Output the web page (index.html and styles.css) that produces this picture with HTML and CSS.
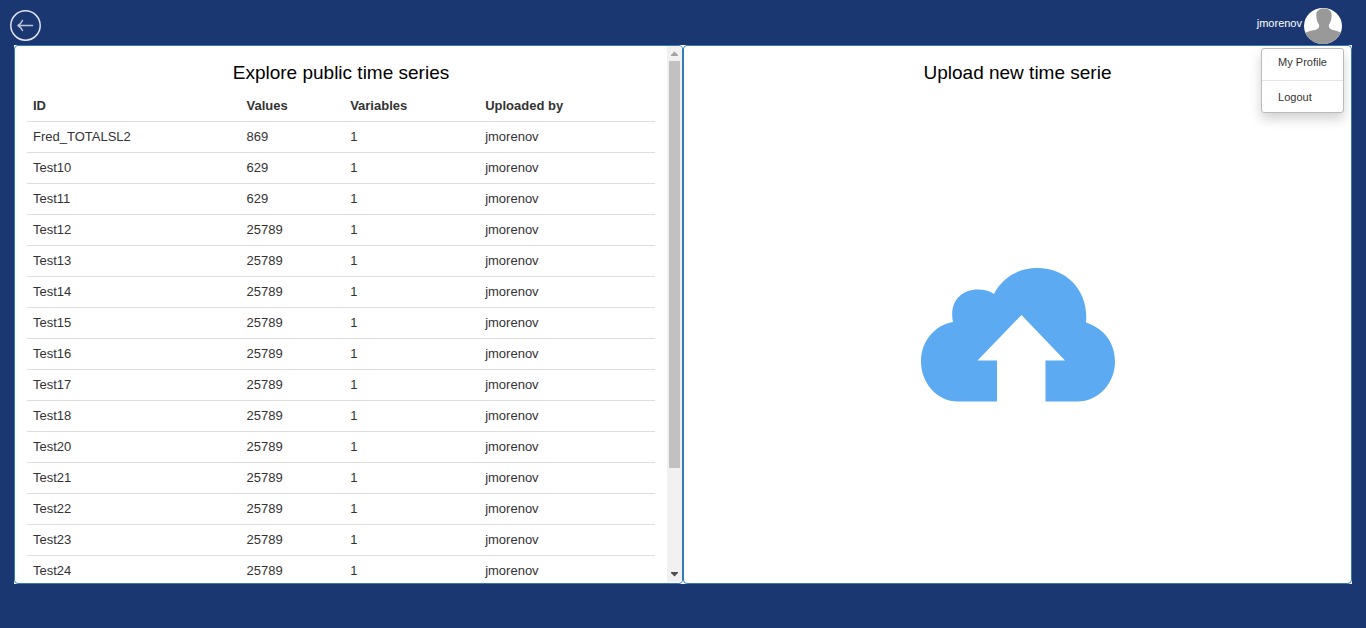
FILE: index.html
```html
<!DOCTYPE html>
<html lang="en">
<head>
<meta charset="utf-8">
<title>Time series</title>
<link rel="stylesheet" href="styles.css">
</head>
<body>
<header class="topbar">
  <button class="back" type="button" aria-label="Back">
    <svg width="32" height="32" viewBox="0 0 32 32" fill="none" stroke-linecap="round" stroke-linejoin="round">
      <circle cx="15.500" cy="16.500" r="14.700" stroke="#dfe4ef" stroke-width="1.500"/>
      <path d="M22.500 16.500H8.500M12.500 11.500C11.300 14 10 15.300 8 16.500C10 17.700 11.300 19 12.500 21.500" stroke="#bcc5da" stroke-width="1.500"/>
    </svg>
  </button>
  <div class="account">
    <button class="account-toggle" type="button">
      <span>jmorenov</span>
      <svg class="avatar" width="38" height="36" viewBox="0 0 38 36">
        <defs><clipPath id="round"><ellipse cx="19" cy="18" rx="19" ry="18"/></clipPath></defs>
        <g clip-path="url(#round)">
          <path fill="#fff" d="M0 0h38v36H0z"/>
          <path fill="#999" d="M20 .5C15 .5 12.200 3 12.300 7C12.400 11 13 14 15 16.500C15.500 19.500 14.500 21 11 22C7 22.800 3 23.500 0 25.500V36H38V25C35 23.500 32 22.700 29 22C25.500 21 24.500 19.500 25 16.500C27 14 27.500 11 27.600 7C27.700 3 25 .5 20 .5Z"/>
        </g>
      </svg>
    </button>
    <nav class="menu">
      <a href="#profile">My Profile</a>
      <a href="#logout">Logout</a>
    </nav>
  </div>
</header>
<main class="panels">
  <section class="panel explore">
    <div class="list">
      <h2>Explore public time series</h2>
      <table>
        <thead><tr><th class="id">ID</th><th class="values">Values</th><th class="variables">Variables</th><th>Uploaded by</th></tr></thead>
        <tbody>
          <tr><td>Fred_TOTALSL2</td><td>869</td><td>1</td><td>jmorenov</td></tr>
          <tr><td>Test10</td><td>629</td><td>1</td><td>jmorenov</td></tr>
          <tr><td>Test11</td><td>629</td><td>1</td><td>jmorenov</td></tr>
          <tr><td>Test12</td><td>25789</td><td>1</td><td>jmorenov</td></tr>
          <tr><td>Test13</td><td>25789</td><td>1</td><td>jmorenov</td></tr>
          <tr><td>Test14</td><td>25789</td><td>1</td><td>jmorenov</td></tr>
          <tr><td>Test15</td><td>25789</td><td>1</td><td>jmorenov</td></tr>
          <tr><td>Test16</td><td>25789</td><td>1</td><td>jmorenov</td></tr>
          <tr><td>Test17</td><td>25789</td><td>1</td><td>jmorenov</td></tr>
          <tr><td>Test18</td><td>25789</td><td>1</td><td>jmorenov</td></tr>
          <tr><td>Test20</td><td>25789</td><td>1</td><td>jmorenov</td></tr>
          <tr><td>Test21</td><td>25789</td><td>1</td><td>jmorenov</td></tr>
          <tr><td>Test22</td><td>25789</td><td>1</td><td>jmorenov</td></tr>
          <tr><td>Test23</td><td>25789</td><td>1</td><td>jmorenov</td></tr>
          <tr><td>Test24</td><td>25789</td><td>1</td><td>jmorenov</td></tr>
        </tbody>
      </table>
    </div>
    <div class="scrollbar" aria-hidden="true">
      <svg width="15" height="15" viewBox="0 0 15 15"><path fill="#a3a3a3" d="M4 10h7v-1L7.500 5.500 4 9z"/></svg>
      <div class="track"><div class="thumb"></div></div>
      <svg width="15" height="15" viewBox="0 0 15 15"><path fill="#505050" d="M4 5h7v1L7.500 9.500 4 6z"/></svg>
    </div>
  </section>
  <section class="panel upload">
    <h2>Upload new time serie</h2>
    <button class="drop" type="button" aria-label="Upload new time serie">
      <svg width="194" height="134" viewBox="0 0 194 134">
        <path fill="#5caaf2" d="M76 133.500H37C16 133.500 0 115 0 93.500C0 73 14 57 32 54C28 35 39 21.500 57 21.500C63 21.500 68 22.500 73 26C81 10 97 0 116 0C147 0 168 24 165 54.500C182 60 194 74 194 93.500C194 115 178 133.500 156 133.500H124.500V92.500H144L100.500 47L56.500 92.500H76Z"/>
      </svg>
    </button>
  </section>
</main>
</body>
</html>
```

FILE: styles.css
```css
* {
  box-sizing: border-box;
}

body {
  margin: 0;
  height: 100vh;
  padding: 0 14px 44px;
  display: flex;
  flex-direction: column;
  background: #1b3771;
  color: #333;
  font: 13px/18px "Liberation Sans", Arial, sans-serif;
}

button {
  border: 0;
  padding: 0;
  background: none;
  font: inherit;
  color: inherit;
  cursor: pointer;
}

svg {
  display: block;
}

.topbar {
  flex: none;
  height: 45px;
  margin: 0 -4px;
  padding-top: 8px;
  display: flex;
  align-items: flex-start;
  justify-content: space-between;
}

.back {
  margin-top: 1px;
}

.account {
  position: relative;
  margin-right: 14px;
}

.account-toggle {
  display: flex;
  gap: 2px;
  color: #fff;
  font-size: 11px;
}

.account-toggle span {
  margin-top: 6px;
}

.menu {
  position: absolute;
  z-index: 1;
  top: 40px;
  right: -2px;
  border: 1px solid #bbb;
  border-radius: 3px;
  background: #fff;
  box-shadow: 0 6px 12px rgba(0, 0, 0, 0.18);
  font-size: 11px;
  white-space: nowrap;
}

.menu a {
  display: block;
  padding: 7px 16px 6px;
  color: #333;
  text-decoration: none;
}

.menu a:first-child {
  padding: 4px 16px 9px;
  border-bottom: 1px solid #e5e5e5;
}

.panels {
  flex: 1;
  min-height: 0;
  display: grid;
  grid-template-columns: 1fr 1fr;
  background: #fff;
}

.panel {
  min-height: 0;
  border: 1px solid #337ab7;
  border-radius: 4px;
  overflow: hidden;
  display: flex;
}

h2 {
  margin: 0;
  color: #000;
  font-size: 19px;
  font-weight: 400;
  line-height: 22px;
  text-align: center;
}

.list {
  flex: 1;
  padding: 16px 12px 0;
  overflow: hidden;
}

table {
  width: 100%;
  margin-top: 7px;
  border-collapse: collapse;
  table-layout: fixed;
}

th,
td {
  padding: 6px;
  border-bottom: 1px solid #ddd;
  text-align: left;
}

.id {
  width: 34%;
}

.values {
  width: 16.5%;
}

.variables {
  width: 21.5%;
}

.scrollbar {
  width: 15px;
  margin-bottom: 1px;
  display: flex;
  flex-direction: column;
  background: #f1f1f1;
}

.track {
  flex: 1;
  padding: 0 2px;
}

.thumb {
  height: 80.5%;
  background: #c1c1c1;
}

.upload {
  flex-direction: column;
  padding-top: 16px;
}

.drop {
  flex: 1;
  display: flex;
  align-items: center;
  justify-content: center;
  padding-top: 2px;
}
```
